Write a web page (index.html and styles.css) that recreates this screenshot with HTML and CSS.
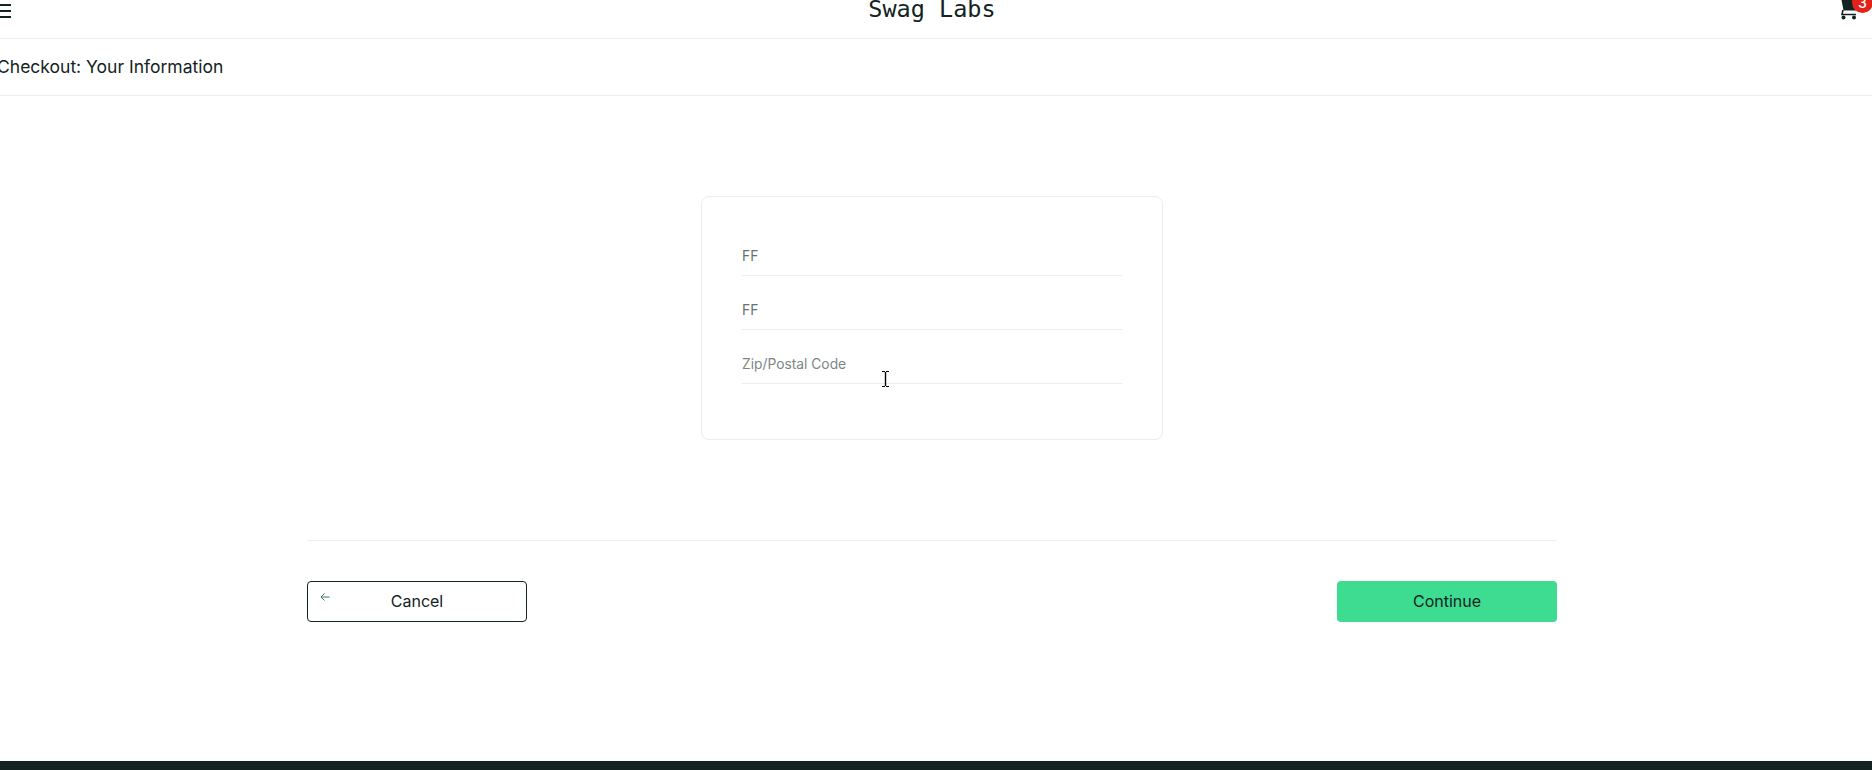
FILE: index.html
```html
<!DOCTYPE html>
<html lang="en">
<head>
    <meta charset="UTF-8">
    <title>Swag Labs</title>
    <meta name="viewport" content="width=device-width, initial-scale=1">
    <link rel="stylesheet" href="styles.css">
</head>
<body>
    <div class="page">
        <header class="top-bar">
            <button class="top-bar__menu" aria-label="Open Menu">
                <svg width="19" height="16" viewBox="0 0 19 16"><path d="M0 1h19M0 7h19M0 13h19" stroke="#132322" stroke-width="2"/></svg>
            </button>
            <div class="top-bar__logo">Swag Labs</div>
            <a class="top-bar__cart" href="#" aria-label="Cart">
                <svg width="22" height="20" viewBox="0 0 22 20"><path d="M0 0h3.500l2 10.500H18L21 0z" fill="#132322"/><path d="M5 10 4 14.500h14" fill="none" stroke="#132322" stroke-width="1.600"/><circle cx="5.500" cy="17.500" r="2" fill="#132322"/><circle cx="16" cy="17.500" r="2" fill="#132322"/></svg>
                <span class="top-bar__badge">3</span>
            </a>
        </header>
        <div class="page-title">Checkout: Your Information</div>
        <main class="checkout">
            <form class="checkout__card">
                <input class="checkout__input" type="text" value="FF" placeholder="First Name">
                <input class="checkout__input" type="text" value="FF" placeholder="Last Name">
                <input class="checkout__input" type="text" placeholder="Zip/Postal Code">
            </form>
            <div class="checkout__footer">
                <button class="btn btn--cancel" type="button">
                    <svg class="btn__arrow" width="10" height="10" viewBox="0 0 10 10"><path d="M9.500 5H1M4.500 1.500 1 5l3.500 3.500" fill="none" stroke="#3d7a68" stroke-width="1"/></svg>
                    Cancel
                </button>
                <button class="btn btn--continue" type="button">Continue</button>
            </div>
        </main>
        <footer class="site-footer"></footer>
        <svg class="mouse-cursor" width="7" height="16" viewBox="0 0 7 16"><path d="M0 .5h3M4 .5h3M0 15.500h3M4 15.500h3" stroke="#000" stroke-width="1" fill="none"/><path d="M3.500 1v14" stroke="#000" stroke-width="1.400"/></svg>
    </div>
</body>
</html>
```

FILE: styles.css
```css
* {
    margin: 0;
    padding: 0;
    box-sizing: border-box;
}
html, body {
    height: 100%;
    overflow: hidden;
}
body {
    font: 16px/24px Inter, "Open Sans", sans-serif;
    background: #fff;
    color: #132322;
}
.page {
    position: relative;
    display: flex;
    flex-direction: column;
    width: 1880px;
    height: 770px;
    margin-left: -8px;
}
.top-bar {
    display: grid;
    grid-template-columns: 1fr auto 1fr;
    align-items: start;
    height: 39px;
    border-bottom: 1px solid #ededed;
}
.top-bar__menu {
    justify-self: start;
    display: flex;
    height: 16px;
    margin-top: 4px;
    border: none;
    background: none;
}
.top-bar__logo {
    margin-top: -9px;
    font: 23.5px/36px "DejaVu Sans Mono", "Liberation Mono", monospace;
}
.top-bar__cart {
    justify-self: end;
    position: relative;
    display: block;
    width: 22px;
    height: 20px;
    margin-right: 12px;
}
.top-bar__badge {
    position: absolute;
    top: -8px;
    left: 14px;
    width: 21px;
    height: 21px;
    border-radius: 50%;
    background: #e2231a;
    color: #fff;
    font-size: 14px;
    font-weight: 500;
    line-height: 21px;
    text-align: center;
}
.page-title {
    height: 57px;
    padding-left: 5px;
    border-bottom: 1px solid #ededed;
    font-size: 17.5px;
    font-weight: 400;
    line-height: 56px;
}
.checkout {
    width: 1250px;
    margin: 0 auto;
    padding-top: 100px;
}
.checkout__card {
    display: flex;
    flex-direction: column;
    width: 462px;
    height: 244px;
    margin: 0 auto;
    padding: 33px 40px 0;
    border: 1px solid #ededed;
    border-radius: 8px;
}
.checkout__input {
    height: 46px;
    margin-bottom: 8px;
    padding-top: 6px;
    border: none;
    border-bottom: 1px solid #ededed;
    outline: none;
    background: none;
    font: 13.8px/24px Inter, "Open Sans", sans-serif;
    color: #68716f;
}
.checkout__input::placeholder {
    color: #7d8684;
    opacity: 1;
}
.checkout__footer {
    display: flex;
    justify-content: space-between;
    margin-top: 100px;
    padding-top: 40px;
    border-top: 1px solid #ededed;
}
.btn {
    position: relative;
    width: 220px;
    height: 41px;
    padding-bottom: 2px;
    border-radius: 4px;
    font: 16px/24px Inter, "Open Sans", sans-serif;
    color: #132322;
    cursor: pointer;
}
.btn--cancel {
    border: 1px solid #132322;
    background: #fff;
}
.btn__arrow {
    position: absolute;
    left: 12px;
    top: 10px;
}
.btn--continue {
    border: none;
    background: #3ddc91;
}
.site-footer {
    margin-top: auto;
    height: 9px;
    background: #132322;
}
.mouse-cursor {
    position: absolute;
    left: 890px;
    top: 371px;
}
```
